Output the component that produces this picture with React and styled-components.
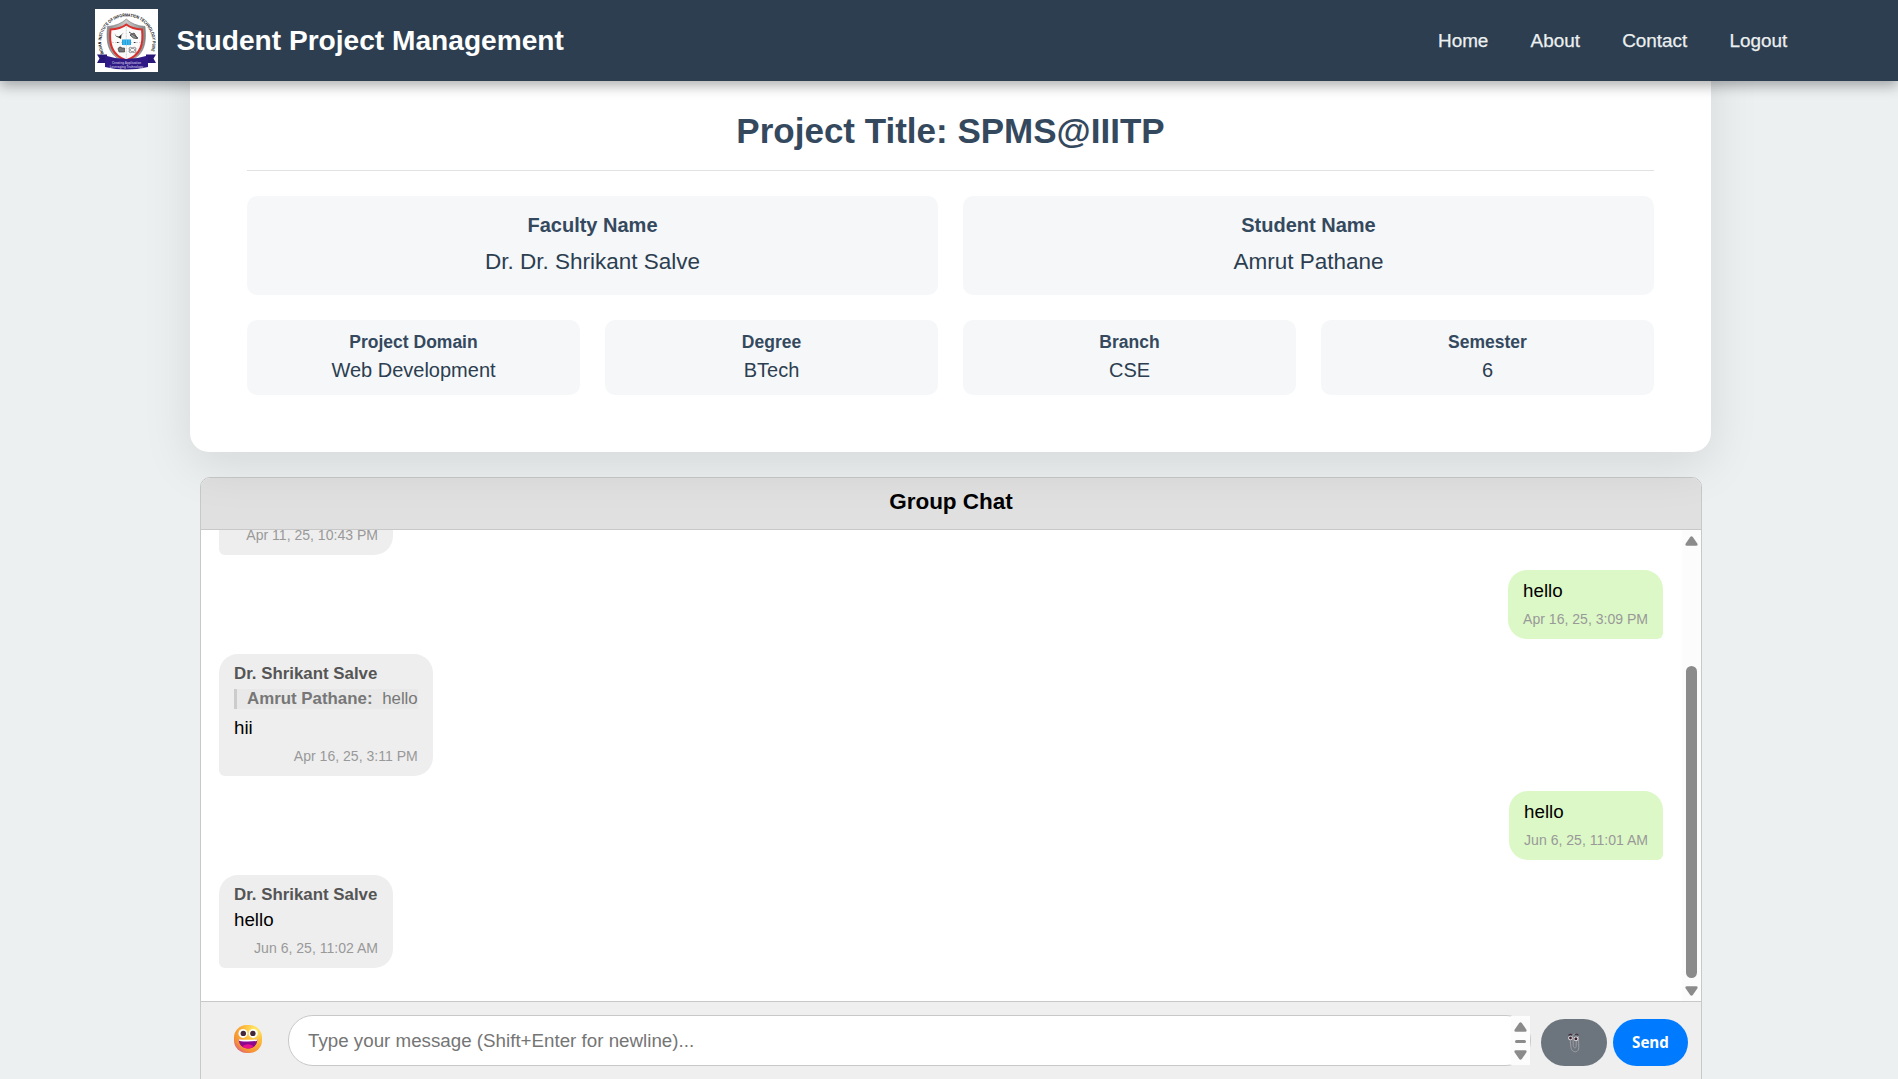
import React from "react";
import styled, { createGlobalStyle } from "styled-components";

const GlobalStyle = createGlobalStyle`
  * { box-sizing: border-box; }
  html, body { margin: 0; height: 100%; overflow: hidden; }
  body {
    background: #ecf0f1;
    font-family: "Liberation Sans", Arial, sans-serif;
  }
`;

const Page = styled.div`
  height: 1079px;
  overflow: hidden;
  display: flex;
  flex-direction: column;
`;

/* ---------- navigation ---------- */
const NavBar = styled.nav`
  position: relative;
  z-index: 10;
  flex: none;
  height: 81px;
  padding: 0 110.8px 0 95px;
  display: flex;
  align-items: center;
  justify-content: space-between;
  background: #2c3e50;
  box-shadow: 0 5px 12px rgba(0, 0, 0, 0.3);
`;

const Brand = styled.div`
  display: flex;
  align-items: center;
  gap: 18.5px;
  color: #fff;
  font-size: 28.125px;
  font-weight: 700;
  line-height: 32px;
`;

const NavLinks = styled.div`
  display: flex;
  gap: 42.2px;
`;

const NavLink = styled.a`
  color: #ecf0f1;
  font-size: 18.9px;
  line-height: 22px;
  -webkit-text-stroke: 0.25px #ecf0f1;
`;

/* ---------- project card ---------- */
const ProjectCard = styled.section`
  position: relative;
  z-index: 2;
  flex: none;
  width: 1521px;
  margin: -60px 0 0 190px;
  padding: 90px 57px 57px;
  background: #fff;
  border-radius: 19px;
  box-shadow: 0 12.5px 50px rgba(0, 0, 0, 0.1);
`;

const ProjectTitle = styled.h1`
  margin: 0 0 25px;
  padding-bottom: 19px;
  border-bottom: 1px solid #e0e3e5;
  color: #34495e;
  font-size: 35px;
  line-height: 40px;
  text-align: center;
`;

const InfoGrid = styled.div`
  display: grid;
  grid-template-columns: repeat(${(p) => p.$columns}, 1fr);
  gap: 25px;
  & + & { margin-top: 25px; }
`;

const InfoBox = styled.div`
  display: flex;
  flex-direction: column;
  align-items: center;
  height: ${(p) => (p.$large ? 99 : 75)}px;
  padding-top: ${(p) => (p.$large ? 18 : 12)}px;
  gap: ${(p) => (p.$large ? 12 : 7)}px;
  background: #f5f7f9;
  border-radius: 10px;
`;

const InfoLabel = styled.div`
  color: #34495e;
  font-weight: 700;
  font-size: ${(p) => (p.$large ? 20 : 17.5)}px;
  line-height: ${(p) => (p.$large ? 23 : 20)}px;
`;

const InfoValue = styled.div`
  color: #2c3e50;
  font-size: ${(p) => (p.$large ? 22.5 : 20)}px;
  line-height: ${(p) => (p.$large ? 26 : 23)}px;
`;

/* ---------- chat ---------- */
const ChatPanel = styled.section`
  flex: none;
  width: 1502px;
  margin: 25px 0 0 200px;
  border: 1px solid #c8c8c8;
  border-radius: 10px;
  background: #fff;
  overflow: hidden;
`;

const ChatHeader = styled.h2`
  margin: 0;
  height: 52px;
  padding: 11px 0 14px;
  background: #e0e0e0;
  border-bottom: 1px solid #c8c8c8;
  color: #000;
  font-size: 22.5px;
  line-height: 26px;
  text-align: center;
`;

const ChatBody = styled.div`
  display: flex;
  height: 471px;
`;

const Messages = styled.div`
  flex: 1;
  display: flex;
  flex-direction: column;
  justify-content: flex-end;
  gap: 15px;
  padding: 0 19px 33px 18px;
  overflow: hidden;
`;

const Bubble = styled.article`
  flex: none;
  align-self: ${(p) => (p.$own ? "flex-end" : "flex-start")};
  min-width: ${(p) => (p.$own ? 0 : 174)}px;
  display: flex;
  flex-direction: column;
  padding: 10px 15px 12px;
  background: ${(p) => (p.$own ? "#dcf8c6" : "#eeeeee")};
  border-radius: ${(p) => (p.$own ? "19px 19px 6px 19px" : "19px 19px 19px 6px")};
`;

const Sender = styled.div`
  margin-bottom: 5px;
  color: #555;
  font-size: 16.875px;
  font-weight: 700;
  line-height: 19px;
`;

const Quote = styled.div`
  display: flex;
  gap: 9.6px;
  margin: 1px 0 8px;
  padding-left: 10px;
  border-left: 3px solid #ccc;
  background: #e9e9e9;
  color: #777;
  font-size: 16.875px;
  line-height: 20px;
`;

const MessageText = styled.div`
  color: #000;
  font-size: 18.75px;
  line-height: 21px;
`;

const Timestamp = styled.time`
  align-self: flex-end;
  margin-top: 10px;
  color: #999;
  font-size: 14.0625px;
  line-height: 16px;
`;

const ScrollTrack = styled.div`
  flex: none;
  width: 19px;
  display: flex;
  flex-direction: column;
  align-items: center;
  padding: 6px 0 5px;
  background: #fcfcfc;
`;

const ScrollThumb = styled.div`
  width: 11px;
  height: 312px;
  margin: auto 0 8px;
  border-radius: 6px;
  background: #8b8b8b;
`;

/* ---------- composer ---------- */
const Composer = styled.div`
  display: flex;
  align-items: flex-start;
  height: 90px;
  padding: 13px 13px 0 33px;
  border-top: 1px solid #c8c8c8;
  background: #efefef;
`;

const EmojiButton = styled.button`
  width: 28px;
  height: 28px;
  margin: 10px 26px 0 0;
  padding: 0;
  border: 0;
  background: none;
  display: flex;
`;

const InputShell = styled.div`
  width: 1243px;
  height: 51px;
  display: flex;
  justify-content: space-between;
  padding-left: 19px;
  border: 1px solid #c8c8c8;
  border-radius: 25px;
  background: #fff;
`;

const Placeholder = styled.div`
  padding-top: 14px;
  color: #757575;
  font-size: 18.75px;
  line-height: 22px;
`;

const InputScroll = styled.div`
  width: 19px;
  height: 49px;
  display: flex;
  flex-direction: column;
  align-items: center;
  justify-content: space-between;
  padding: 6px 0 5px;
  background: #fcfcfc;
`;

const ScrollDash = styled.div`
  width: 11px;
  height: 3px;
  border-radius: 2px;
  background: #8b8b8b;
`;

const PillButton = styled.button`
  width: ${(p) => p.$width}px;
  height: 47px;
  margin: 4px 0 0 ${(p) => p.$offset}px;
  padding: 0 0 ${(p) => p.$lift || 0}px;
  display: flex;
  align-items: center;
  justify-content: center;
  border: 0;
  border-radius: 24px;
  background: ${(p) => p.$color};
  color: #fff;
  font: 700 15.2px "Open Sans", "Noto Sans", sans-serif;
`;

/* ---------- drawings ---------- */
const Arrow = ({ down }) => (
  <svg width="13" height="10" viewBox="0 0 13 10">
    <path
      transform={down ? "rotate(180 6.5 5)" : undefined}
      d="M5.2 1Q6.5-.6 7.8 1L12.3 7.5Q13.3 9.8 11.2 9.8H1.8Q-.3 9.8 .7 7.5Z"
      fill="#8b8b8b"
    />
  </svg>
);

const Crest = () => (
  <svg width="63" height="63" viewBox="0 0 63 63">
    <defs>
      <path id="crestArc" d="M9 44.500A25.600 25.600 0 1 1 54.800 44.500" />
      <linearGradient id="steel" x1="0" x2="1">
        <stop offset="0" stopColor="#8b8b8b" />
        <stop offset=".5" stopColor="#c9c9c9" />
        <stop offset="1" stopColor="#858585" />
      </linearGradient>
    </defs>
    <rect width="63" height="63" fill="#fff" />
    <text fontSize="4.4" fontWeight="700" fill="#111" fontFamily="Liberation Sans, Arial, sans-serif">
      <textPath href="#crestArc" textLength="101" lengthAdjust="spacingAndGlyphs">
        INDIAN INSTITUTE OF INFORMATION TECHNOLOGY PUNE
      </textPath>
    </text>
    <path
      d="M31.3 10Q38 16.5 50 17.5C51.5 33 50.5 47 31.3 53.5C12 47 11 33 12.5 17.5Q24.500 16.500 31.300 10Z"
      fill="url(#steel)"
      stroke="#777"
      strokeWidth=".6"
    />
    <path
      d="M31.300 15.500Q37 20 47 20.500C48.500 34 46.500 46 31.300 51.500C16 46 14 34 15.500 20.500Q25.500 20 31.300 15.500Z"
      fill="#fafafa"
      stroke="#d9322e"
      strokeWidth="2"
    />
    <path d="M31.300 17.500V50M17 33.500H46" stroke="#c9c9c9" strokeWidth=".8" strokeDasharray="2 1" />
    <path d="M19.500 24Q21 28 24 27.500L29 23.500L26.500 26L26 30L23.500 28.500Q20.500 28 19.500 24Z" fill="#222" />
    <path d="M34 23L43 29M35 26L39 24L42.500 29.500L38.500 29Z" fill="#999" stroke="#555" strokeWidth="1" />
    <path d="M27 30.500H36V36H27Z" fill="#21a3e2" />
    <path d="M29 30V36.500M31.500 30V36.500M34 30V36.500" stroke="#7bd0f5" strokeWidth=".6" />
    <path d="M22 33.500H23.500M39 33.500H40.500" stroke="#333" strokeWidth="1.200" />
    <path d="M23 39.500Q25 36.500 27 39L29.500 39V43L24 43Z" fill="#777" stroke="#444" strokeWidth=".7" />
    <g fill="none" stroke="#777" strokeWidth=".7">
      <ellipse cx="37.500" cy="41" rx="4" ry="1.800" transform="rotate(30 37.500 41)" />
      <ellipse cx="37.500" cy="41" rx="4" ry="1.800" transform="rotate(-30 37.500 41)" />
    </g>
    <path d="M2 45.500H12V54H2L4.500 49.500ZM61 45.500H51V54H61L58.500 49.500Z" fill="#2a1878" />
    <path d="M10 46.500Q31 53.500 53 46.500V58Q31 63 10 58Z" fill="#301b86" />
    <g fill="#b9b0dd" fontSize="3" fontFamily="Liberation Sans, Arial, sans-serif" textAnchor="middle">
      <text x="31.500" y="55.300">Creating Application</text>
      <text x="31.500" y="58.900">Leveraging Technology</text>
    </g>
  </svg>
);

const GrinFace = () => (
  <svg width="28" height="28" viewBox="0 0 28 28">
    <defs>
      <radialGradient id="face" cx=".75" cy=".2" r=".95">
        <stop offset="0" stopColor="#fff06a" />
        <stop offset=".45" stopColor="#fdb93c" />
        <stop offset=".8" stopColor="#f59332" />
        <stop offset="1" stopColor="#dc5a8a" />
      </radialGradient>
    </defs>
    <rect width="28" height="28" rx="12.500" fill="url(#face)" />
    <circle cx="9" cy="8.400" r="4.500" fill="#fff" />
    <circle cx="19.200" cy="8.400" r="4.500" fill="#fff" />
    <circle cx="9.300" cy="8.400" r="2.700" fill="#43283a" />
    <circle cx="18.900" cy="8.400" r="2.700" fill="#43283a" />
    <path d="M4.800 14.500Q14 15.500 23.300 14.500C23.200 20 19.500 23.500 14 23.500S4.900 20 4.800 14.500Z" fill="#8b078e" />
    <path d="M8.500 21Q14 17.500 19.500 21Q17.500 23.500 14 23.500T8.500 21Z" fill="#e8108c" />
    <path d="M4.800 14.300Q14 15.300 23.300 14.300L22.800 16Q14 17 5.300 16Z" fill="#fff" />
  </svg>
);

const Paperclip = () => (
  <svg width="14" height="22" viewBox="0 0 14 22">
    <g fill="none" stroke="#a09da3" strokeWidth="1" strokeLinecap="round">
      <path d="M3 7L4 15.500C5 21.500 12 21 11.800 15.500L11.500 5C11 1 6 1 5.800 4L6.300 13.500C6.800 17 9.500 16.500 9.200 13.500V8" />
    </g>
    <path d="M1.500 3.500Q3 1.500 5 3M8 2.500Q10 1.500 11.500 3.500" fill="none" stroke="#3e2b38" strokeWidth="1.200" />
    <circle cx="3.400" cy="6" r="2.200" fill="#e6e4e6" />
    <circle cx="9" cy="6.800" r="2.400" fill="#e6e4e6" />
    <circle cx="3.500" cy="6" r="1.400" fill="#3c2030" />
    <circle cx="8.900" cy="6.800" r="1.500" fill="#3c2030" />
  </svg>
);

/* ---------- data ---------- */
const links = ["Home", "About", "Contact", "Logout"];
const people = [
  ["Faculty Name", "Dr. Dr. Shrikant Salve"],
  ["Student Name", "Amrut Pathane"],
];
const details = [
  ["Project Domain", "Web Development"],
  ["Degree", "BTech"],
  ["Branch", "CSE"],
  ["Semester", "6"],
];
const messages = [
  { time: "Apr 11, 25, 10:43 PM" },
  { own: true, text: "hello", time: "Apr 16, 25, 3:09 PM" },
  {
    sender: "Dr. Shrikant Salve",
    quote: { name: "Amrut Pathane:", text: "hello" },
    text: "hii",
    time: "Apr 16, 25, 3:11 PM",
  },
  { own: true, text: "hello", time: "Jun 6, 25, 11:01 AM" },
  { sender: "Dr. Shrikant Salve", text: "hello", time: "Jun 6, 25, 11:02 AM" },
];

const InfoRow = ({ items, large }) => (
  <InfoGrid $columns={items.length}>
    {items.map(([label, value]) => (
      <InfoBox key={label} $large={large}>
        <InfoLabel $large={large}>{label}</InfoLabel>
        <InfoValue $large={large}>{value}</InfoValue>
      </InfoBox>
    ))}
  </InfoGrid>
);

const Message = ({ own, sender, quote, text, time }) => (
  <Bubble $own={own}>
    {sender && <Sender>{sender}</Sender>}
    {quote && (
      <Quote>
        <strong>{quote.name}</strong>
        <span>{quote.text}</span>
      </Quote>
    )}
    {text && <MessageText>{text}</MessageText>}
    <Timestamp>{time}</Timestamp>
  </Bubble>
);

export default function App() {
  return (
    <Page>
      <GlobalStyle />
      <NavBar>
        <Brand>
          <Crest />
          <span>Student Project Management</span>
        </Brand>
        <NavLinks>
          {links.map((l) => (
            <NavLink key={l}>{l}</NavLink>
          ))}
        </NavLinks>
      </NavBar>

      <ProjectCard>
        <ProjectTitle>Project Title: SPMS@IIITP</ProjectTitle>
        <InfoRow items={people} large />
        <InfoRow items={details} />
      </ProjectCard>

      <ChatPanel>
        <ChatHeader>Group Chat</ChatHeader>
        <ChatBody>
          <Messages>
            {messages.map((m, i) => (
              <Message key={i} {...m} />
            ))}
          </Messages>
          <ScrollTrack>
            <Arrow />
            <ScrollThumb />
            <Arrow down />
          </ScrollTrack>
        </ChatBody>
        <Composer>
          <EmojiButton aria-label="Emoji">
            <GrinFace />
          </EmojiButton>
          <InputShell>
            <Placeholder>Type your message (Shift+Enter for newline)...</Placeholder>
            <InputScroll>
              <Arrow />
              <ScrollDash />
              <Arrow down />
            </InputScroll>
          </InputShell>
          <PillButton $width={66} $offset={10} $color="#6c757d" aria-label="Attach">
            <Paperclip />
          </PillButton>
          <PillButton $width={75} $offset={6} $lift={2} $color="#007bff">
            Send
          </PillButton>
        </Composer>
      </ChatPanel>
    </Page>
  );
}
